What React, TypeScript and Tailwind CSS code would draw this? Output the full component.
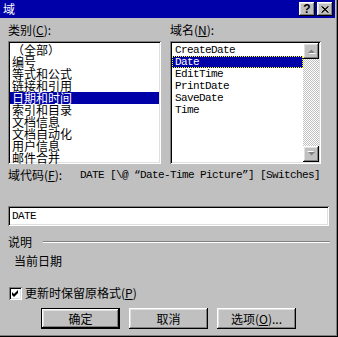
import React from "react";

const cjk = "font-['SimSun','Noto_Sans_CJK_SC',sans-serif]";
const mono = "font-['Liberation_Mono','Noto_Sans_CJK_SC',monospace]";

const categories = [
  "（全部）",
  "编号",
  "等式和公式",
  "链接和引用",
  "日期和时间",
  "索引和目录",
  "文档信息",
  "文档自动化",
  "用户信息",
  "邮件合并",
];

const fields = ["CreateDate", "Date", "EditTime", "PrintDate", "SaveDate", "Time"];

// raised win95 box
function Raised({ className = "", children }: { className?: string; children?: React.ReactNode }) {
  return (
    <div
      className={
        "bg-[#c0c0c0] shadow-[inset_-1px_-1px_#000,inset_1px_1px_#fff,inset_-2px_-2px_#808080,inset_2px_2px_#dfdfdf] " +
        className
      }
    >
      {children}
    </div>
  );
}

// sunken win95 box
function Sunken({ className = "", children }: { className?: string; children?: React.ReactNode }) {
  return (
    <div
      className={
        "bg-white shadow-[inset_1px_1px_#808080,inset_-1px_-1px_#fff,inset_2px_2px_#000,inset_-2px_-2px_#dfdfdf] " +
        className
      }
    >
      {children}
    </div>
  );
}

function Arrow({ down }: { down?: boolean }) {
  return (
    <svg width="9" height="6" viewBox="0 0 9 6" className={down ? "rotate-180" : ""}>
      <polygon points="1,5 4.5,1.5 8,5" fill="#fff" transform="translate(1,1)" />
      <polygon points="1,5 4.5,1.5 8,5" fill="#808080" />
    </svg>
  );
}

function Btn({ label, isDefault }: { label: React.ReactNode; isDefault?: boolean }) {
  return (
    <div className={"w-[79px] h-[21px] " + (isDefault ? "border border-black" : "")}>
      <Raised className="w-full h-full flex items-center justify-center text-[12px] leading-none text-black">
        {label}
      </Raised>
    </div>
  );
}

export default function App() {
  return (
    <div
      className={
        "w-[338px] h-[337px] bg-[#c0c0c0] flex flex-col text-black shadow-[inset_-1px_-1px_#000,inset_-2px_-2px_#808080] " +
        cjk
      }
    >
      {/* title bar */}
      <div className="h-[18px] mr-[3px] bg-[#0000a8] flex items-center justify-between pl-[3px] pr-[2px]">
        <span className="text-white text-[12px] leading-none">域</span>
        <div className="flex gap-[2px]">
          <Raised className="w-[16px] h-[14px] flex items-center justify-center">
            <span className="text-[12px] leading-none font-bold font-['Liberation_Sans',sans-serif]">?</span>
          </Raised>
          <Raised className="w-[16px] h-[14px] flex items-center justify-center">
            <svg width="8" height="7" viewBox="0 0 8 7">
              <path d="M0.5 0.5 L7 6.5 M1.5 0.5 L7.5 6.5 M7 0.5 L0.5 6.5 M7.5 0.5 L1 6.5" stroke="#000" strokeWidth="1" />
            </svg>
          </Raised>
        </div>
      </div>

      {/* lists */}
      <div className="flex mt-[4px] pl-[8px]">
        <div className="w-[153px] flex flex-col">
          <div className="h-[16px] text-[12px] leading-[16px]">
            类别(<u>C</u>):
          </div>
          <Sunken className="mt-[3px] h-[123px] p-[2px]">
            {categories.map((c, i) => (
              <div
                key={c}
                className={
                  "h-[12px] text-[12px] leading-[12px] pl-[2px] whitespace-nowrap " +
                  (i === 0 ? "mt-[1px] " : "") +
                  (i === 4 ? "bg-[#0000a8] text-white" : "")
                }
              >
                {c}
              </div>
            ))}
          </Sunken>
        </div>

        <div className="w-[151px] ml-[9px] flex flex-col">
          <div className="h-[16px] text-[12px] leading-[16px]">
            域名(<u>N</u>):
          </div>
          <Sunken className="mt-[3px] h-[123px] p-[2px] flex">
            <div className="flex-1 pt-[1px]">
              {fields.map((f, i) => (
                <div
                  key={f}
                  className={
                    "h-[12px] text-[11px] leading-[10px] tracking-[-0.6px] pl-[2px] " +
                    mono +
                    (i === 1 ? " bg-[#0000a8] text-white border border-dotted border-[#ffff00]" : " border border-transparent")
                  }
                >
                  {f}
                </div>
              ))}
            </div>
            <div className="w-[16px] flex flex-col bg-[repeating-conic-gradient(#fff_0_25%,#c0c0c0_0_50%)] bg-[length:2px_2px]">
              <Raised className="h-[16px] flex items-center justify-center">
                <Arrow />
              </Raised>
              <div className="flex-1" />
              <Raised className="h-[16px] flex items-center justify-center">
                <Arrow down />
              </Raised>
            </div>
          </Sunken>
        </div>
      </div>

      {/* field code */}
      <div className="flex mt-[4px] pl-[8px] h-[14px] items-center whitespace-nowrap">
        <span className="text-[12px] leading-none w-[72px]">
          域代码(<u>F</u>):
        </span>
        <span className={"text-[11px] leading-none tracking-[-0.6px] " + mono}>
          DATE [\@ “Date-Time Picture”] [Switches]
        </span>
      </div>

      <Sunken className="mt-[24px] ml-[8px] w-[321px] h-[20px] flex items-center pl-[4px]">
        <span className={"text-[11px] leading-none tracking-[-0.6px] " + mono}>DATE</span>
      </Sunken>

      {/* description */}
      <div className="flex items-center mt-[8px] pl-[8px] h-[16px]">
        <span className="text-[12px] leading-none">说明</span>
        <div className="flex-1 ml-[11px] mr-[8px] border-t border-t-[#808080] border-b border-b-white" />
      </div>
      <div className="mt-[3px] pl-[14px] h-[16px] text-[12px] leading-[16px]">当前日期</div>

      {/* checkbox */}
      <div className="flex items-center mt-[16px] pl-[9px] h-[16px]">
        <Sunken className="w-[13px] h-[13px] flex items-center justify-center">
          <svg width="7" height="7" viewBox="0 0 7 7">
            <path d="M0 2 L2 4 L6 0 L6 3 L2 7 L0 5 Z" fill="#000" />
          </svg>
        </Sunken>
        <span className="ml-[3px] text-[12px] leading-none">
          更新时保留原格式(<u>P</u>)
        </span>
      </div>

      {/* buttons */}
      <div className="flex mt-[7px] pl-[41px] gap-[9px]">
        <Btn label="确定" isDefault />
        <Btn label="取消" />
        <Btn
          label={
            <span>
              选项(<u>O</u>)...
            </span>
          }
        />
      </div>
    </div>
  );
}
